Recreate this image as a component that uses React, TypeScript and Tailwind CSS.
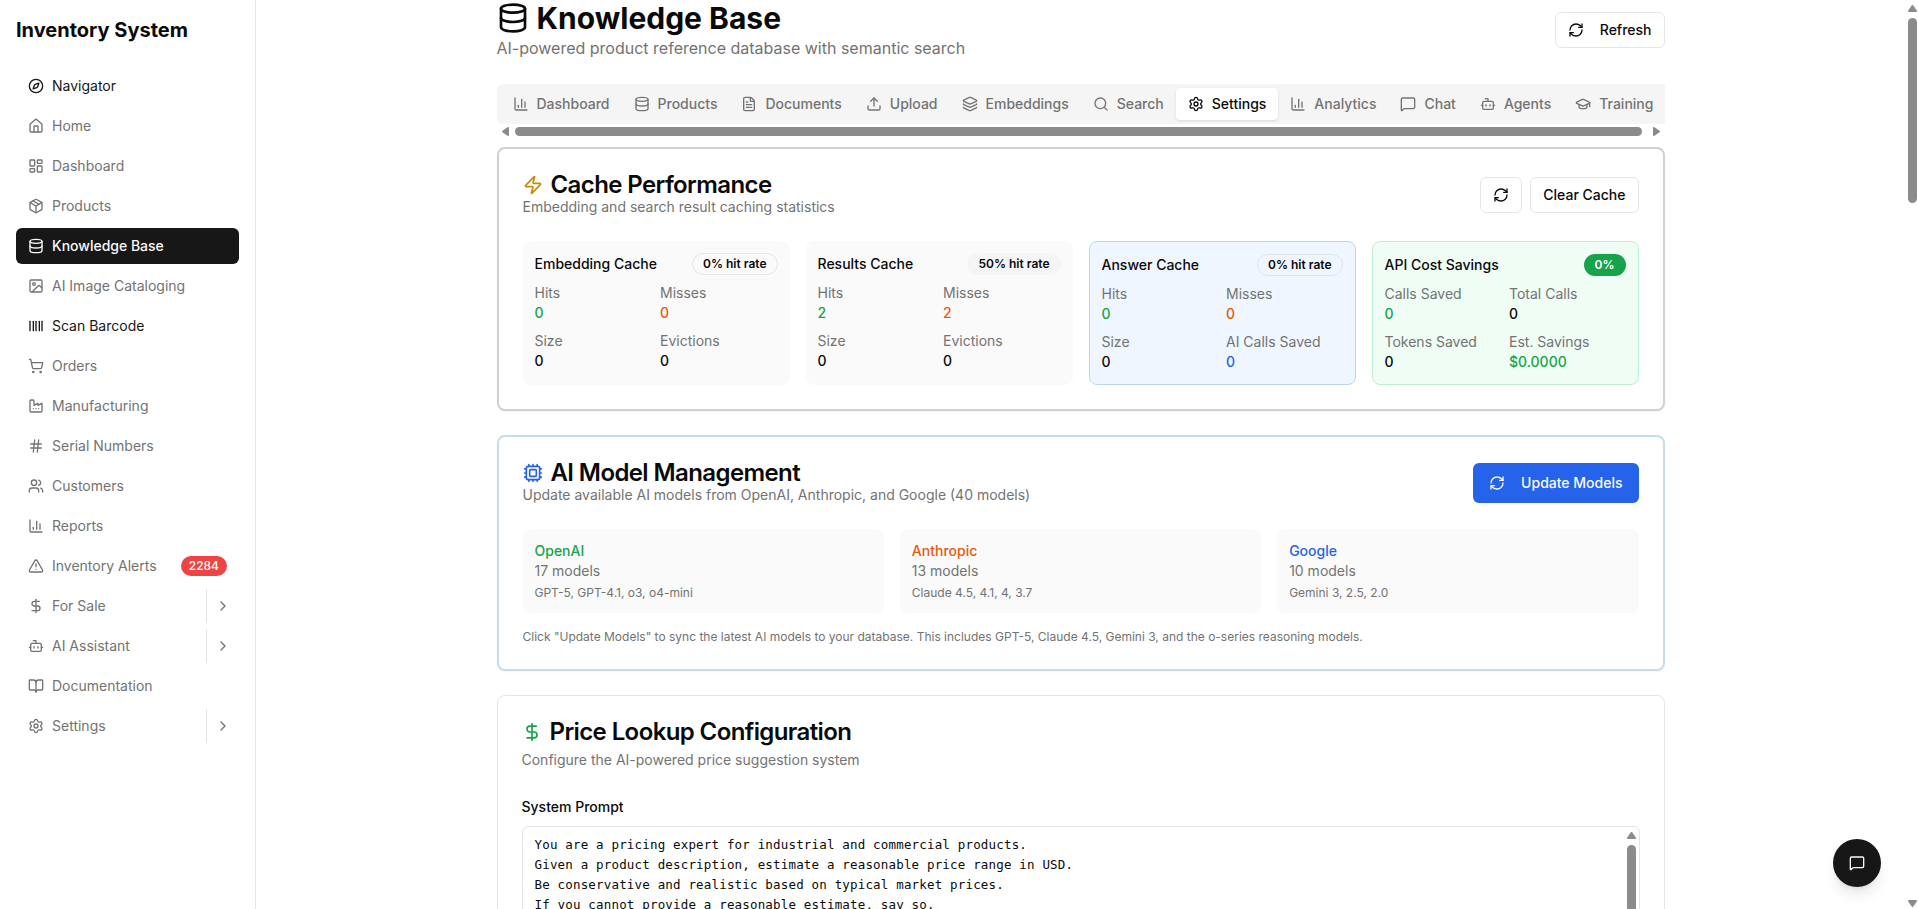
import { FC } from 'react';
import {
    BookOpen, Bot, Barcode, ChartColumn, ChevronRight, Compass, Cpu, Database, DollarSign, Factory, FileText,
    GraduationCap, Hash, House, Image, Layers, LayoutDashboard, LucideIcon, MessageSquare, Package, RefreshCw,
    Search, Settings, ShoppingCart, TriangleAlert, Upload, Users, Zap,
} from 'lucide-react';

interface NavItem {
    label: string;
    icon: LucideIcon;
    dark?: boolean;
    badge?: string;
    expandable?: boolean;
}

interface CacheStat {
    label: string;
    value: string;
    color: string;
}

interface CacheCard {
    title: string;
    badge: string;
    card: string;
    badgeClass: string;
    stats: CacheStat[];
}

const navItems: NavItem[] = [
    { label: 'Navigator', icon: Compass, dark: true },
    { label: 'Home', icon: House },
    { label: 'Dashboard', icon: LayoutDashboard },
    { label: 'Products', icon: Package },
    { label: 'Knowledge Base', icon: Database },
    { label: 'AI Image Cataloging', icon: Image },
    { label: 'Scan Barcode', icon: Barcode, dark: true },
    { label: 'Orders', icon: ShoppingCart },
    { label: 'Manufacturing', icon: Factory },
    { label: 'Serial Numbers', icon: Hash },
    { label: 'Customers', icon: Users },
    { label: 'Reports', icon: ChartColumn },
    { label: 'Inventory Alerts', icon: TriangleAlert, badge: '2284' },
    { label: 'For Sale', icon: DollarSign, expandable: true },
    { label: 'AI Assistant', icon: Bot, expandable: true },
    { label: 'Documentation', icon: BookOpen },
    { label: 'Settings', icon: Settings, expandable: true },
];

const tabs = [
    { label: 'Dashboard', icon: ChartColumn },
    { label: 'Products', icon: Database },
    { label: 'Documents', icon: FileText },
    { label: 'Upload', icon: Upload },
    { label: 'Embeddings', icon: Layers },
    { label: 'Search', icon: Search },
    { label: 'Settings', icon: Settings },
    { label: 'Analytics', icon: ChartColumn },
    { label: 'Chat', icon: MessageSquare },
    { label: 'Agents', icon: Bot },
    { label: 'Training', icon: GraduationCap },
];

const green = 'text-[#16a34a]';
const orange = 'text-[#ea580c]';
const blue = 'text-[#2563eb]';
const black = 'text-[#0a0a0a]';

const caches: CacheCard[] = [
    {
        title: 'Embedding Cache', badge: '0% hit rate', card: 'bg-[#fafafa]', badgeClass: 'border-[#e5e5e5]',
        stats: [
            { label: 'Hits', value: '0', color: green },
            { label: 'Misses', value: '0', color: orange },
            { label: 'Size', value: '0', color: black },
            { label: 'Evictions', value: '0', color: black },
        ],
    },
    {
        title: 'Results Cache', badge: '50% hit rate', card: 'bg-[#fafafa]', badgeClass: 'border-transparent bg-[#f5f5f5]',
        stats: [
            { label: 'Hits', value: '2', color: green },
            { label: 'Misses', value: '2', color: orange },
            { label: 'Size', value: '0', color: black },
            { label: 'Evictions', value: '0', color: black },
        ],
    },
    {
        title: 'Answer Cache', badge: '0% hit rate', card: 'border border-[#c0d4f0] bg-[#eff6ff]', badgeClass: 'border-[#e0e5ec]',
        stats: [
            { label: 'Hits', value: '0', color: green },
            { label: 'Misses', value: '0', color: orange },
            { label: 'Size', value: '0', color: black },
            { label: 'AI Calls Saved', value: '0', color: blue },
        ],
    },
    {
        title: 'API Cost Savings', badge: '0%', card: 'border border-[#bbf0d0] bg-[#f0fdf4]', badgeClass: 'border-transparent bg-[#16a34a] text-white',
        stats: [
            { label: 'Calls Saved', value: '0', color: green },
            { label: 'Total Calls', value: '0', color: black },
            { label: 'Tokens Saved', value: '0', color: black },
            { label: 'Est. Savings', value: '$0.0000', color: green },
        ],
    },
];

const providers = [
    { name: 'OpenAI', count: '17 models', models: 'GPT-5, GPT-4.1, o3, o4-mini', color: green },
    { name: 'Anthropic', count: '13 models', models: 'Claude 4.5, 4.1, 4, 3.7', color: orange },
    { name: 'Google', count: '10 models', models: 'Gemini 3, 2.5, 2.0', color: blue },
];

const prompt = `You are a pricing expert for industrial and commercial products.
Given a product description, estimate a reasonable price range in USD.
Be conservative and realistic based on typical market prices.
If you cannot provide a reasonable estimate, say so.`;

const Arrow: FC<{ className: string }> = ({ className }) => (
    <svg viewBox="0 0 9 7" className={`shrink-0 fill-[#8b8b8b] ${className}`}>
        <path d="M3.7.5a1 1 0 0 1 1.6 0L8.8 5.4Q9.3 7 8 7H1Q-.3 7 .2 5.4Z" />
    </svg>
);

const Sidebar = () => (
    <aside className="w-64 shrink-0 border-r border-[#e5e5e5] p-4">
        <h1 className="text-xl font-bold">Inventory System</h1>
        <nav className="mt-6 flex flex-col gap-1">
            {navItems.map((item) => {
                const active = item.label === 'Knowledge Base';
                const color = active ? 'bg-[#171717] text-[#fafafa] font-medium' : item.dark ? 'text-[#171717]' : 'text-[#737373]';
                return (
                    <div key={item.label} className={`flex h-9 items-center rounded-md text-sm ${color}`}>
                        <div className="flex flex-1 items-center gap-2 px-3">
                            <item.icon className="size-4" />
                            <span>{item.label}</span>
                            {item.badge && (
                                <span className="ml-auto rounded-full bg-[#ef4444] px-2 py-0.5 text-xs font-medium text-white">{item.badge}</span>
                            )}
                        </div>
                        {item.expandable && (
                            <button className="flex h-[34px] items-center border-l border-[#e5e5e5] px-2">
                                <ChevronRight className="size-4" />
                            </button>
                        )}
                    </div>
                );
            })}
        </nav>
    </aside>
);

const TabBar = () => (
    <div>
        <div className="overflow-hidden">
            <div className="flex h-10 w-max items-center rounded-md bg-[#f5f5f5] p-1">
                {tabs.map((tab) => (
                    <button
                        key={tab.label}
                        className={`flex items-center gap-2 rounded-sm px-3 py-1.5 text-sm font-medium ${tab.label === 'Settings' ? 'bg-white text-[#0a0a0a] shadow-sm' : 'text-[#737373]'}`}
                    >
                        <tab.icon className="size-4" />
                        {tab.label}
                    </button>
                ))}
            </div>
        </div>
        <div className="flex h-[15px] items-center pl-1 pr-1">
            <Arrow className="h-[7px] w-[9px] -rotate-90" />
            <div className="ml-[5px] mr-[10px] h-[9px] flex-1 rounded-full bg-[#8b8b8b]" />
            <Arrow className="h-[7px] w-[9px] rotate-90" />
        </div>
    </div>
);

const CachePerformance = () => (
    <section className="mt-2 rounded-lg border-2 border-[#d1d1d1] p-6 shadow-xs">
        <div className="flex items-center justify-between">
            <div>
                <h3 className="flex items-center gap-2 text-2xl leading-none font-semibold tracking-tight">
                    <Zap className="size-5 text-[#ca8a04]" />
                    Cache Performance
                </h3>
                <p className="text-sm text-[#737373]">Embedding and search result caching statistics</p>
            </div>
            <div className="flex gap-2">
                <button className="flex h-9 items-center rounded-md border border-[#e5e5e5] px-3">
                    <RefreshCw className="size-4" />
                </button>
                <button className="h-9 rounded-md border border-[#e5e5e5] px-3 text-sm font-medium">Clear Cache</button>
            </div>
        </div>
        <div className="mt-6 grid grid-cols-4 gap-4">
            {caches.map((cache) => (
                <div key={cache.title} className={`rounded-lg p-3 ${cache.card}`}>
                    <div className="mb-2 flex items-center justify-between">
                        <span className="text-sm font-medium">{cache.title}</span>
                        <span className={`rounded-full border px-2.5 py-0.5 text-xs font-semibold ${cache.badgeClass}`}>{cache.badge}</span>
                    </div>
                    <div className="grid grid-cols-2 gap-2 text-sm">
                        {cache.stats.map((stat) => (
                            <div key={stat.label}>
                                <p className="text-[#737373]">{stat.label}</p>
                                <p className={`font-medium ${stat.color}`}>{stat.value}</p>
                            </div>
                        ))}
                    </div>
                </div>
            ))}
        </div>
    </section>
);

const ModelManagement = () => (
    <section className="mt-6 rounded-lg border-2 border-[#c8dcea] p-6 shadow-xs">
        <div className="flex items-center justify-between">
            <div>
                <h3 className="flex items-center gap-2 text-2xl leading-none font-semibold tracking-tight">
                    <Cpu className="size-5 text-[#2563eb]" />
                    AI Model Management
                </h3>
                <p className="text-sm text-[#737373]">Update available AI models from OpenAI, Anthropic, and Google (40 models)</p>
            </div>
            <button className="flex h-10 items-center gap-4 rounded-md bg-[#2563eb] px-4 text-sm font-medium text-[#fafafa]">
                <RefreshCw className="size-4" />
                Update Models
            </button>
        </div>
        <div className="mt-6 grid grid-cols-3 gap-4">
            {providers.map((provider) => (
                <div key={provider.name} className="rounded-lg bg-[#fafafa] p-3">
                    <p className={`text-sm font-medium ${provider.color}`}>{provider.name}</p>
                    <p className="text-sm text-[#737373]">{provider.count}</p>
                    <p className="mt-1 text-xs text-[#737373]">{provider.models}</p>
                </div>
            ))}
        </div>
        <p className="mt-4 text-xs text-[#737373]">
            Click "Update Models" to sync the latest AI models to your database. This includes GPT-5, Claude 4.5, Gemini 3, and the o-series reasoning models.
        </p>
    </section>
);

const PriceLookup = () => (
    <section className="mt-6 rounded-lg border border-[#e5e5e5] p-6">
        <h3 className="flex items-center gap-2 text-2xl leading-none font-semibold tracking-tight">
            <DollarSign className="size-5 text-[#16a34a]" />
            Price Lookup Configuration
        </h3>
        <p className="mt-1.5 text-sm text-[#737373]">Configure the AI-powered price suggestion system</p>
        <p className="mt-[25px] mb-[7px] text-sm leading-6 font-medium">System Prompt</p>
        <div className="flex h-[200px] justify-between rounded-md border border-[#e5e5e5]">
            <pre className="px-3 py-2 font-['DejaVu_Sans_Mono',monospace] text-[12.5px] leading-5 tracking-[0.17px]">{prompt}</pre>
            <div className="flex w-[15px] flex-col items-center pt-[5px]">
                <Arrow className="h-[7px] w-[9px]" />
                <div className="mt-1.5 w-[9px] flex-1 rounded-t-full bg-[#8b8b8b]" />
            </div>
        </div>
    </section>
);

const App: FC = () => (
    <div className="relative flex h-[909px] w-[1918px] overflow-hidden bg-white font-['Inter',sans-serif] text-[#0a0a0a]">
        <Sidebar />
        <main className="flex flex-1 justify-center">
            <div className="w-[1168px]">
                <div className="mb-6 flex items-center justify-between">
                    <div>
                        <h1 className="flex items-center gap-2 text-3xl font-bold">
                            <Database className="size-8" />
                            Knowledge Base
                        </h1>
                        <p className="text-[#737373]">AI-powered product reference database with semantic search</p>
                    </div>
                    <button className="flex h-9 items-center gap-4 rounded-md border border-[#e5e5e5] px-3 text-sm font-medium">
                        <RefreshCw className="size-4" />
                        Refresh
                    </button>
                </div>
                <TabBar />
                <CachePerformance />
                <ModelManagement />
                <PriceLookup />
            </div>
        </main>
        <div className="flex w-[13px] flex-col items-center justify-between pt-[5px] pb-0.5 pl-[3px] pr-px">
            <div className="flex flex-col items-center gap-1.5">
                <Arrow className="h-[7px] w-[9px]" />
                <div className="h-[185px] w-[9px] rounded-full bg-[#8b8b8b]" />
            </div>
            <Arrow className="h-[7px] w-[9px] rotate-180" />
        </div>
        <button className="absolute right-[37px] bottom-[22px] flex size-12 items-center justify-center rounded-full bg-[#171717] text-[#fafafa] shadow-lg">
            <MessageSquare className="size-4" />
        </button>
    </div>
);

export default App;
